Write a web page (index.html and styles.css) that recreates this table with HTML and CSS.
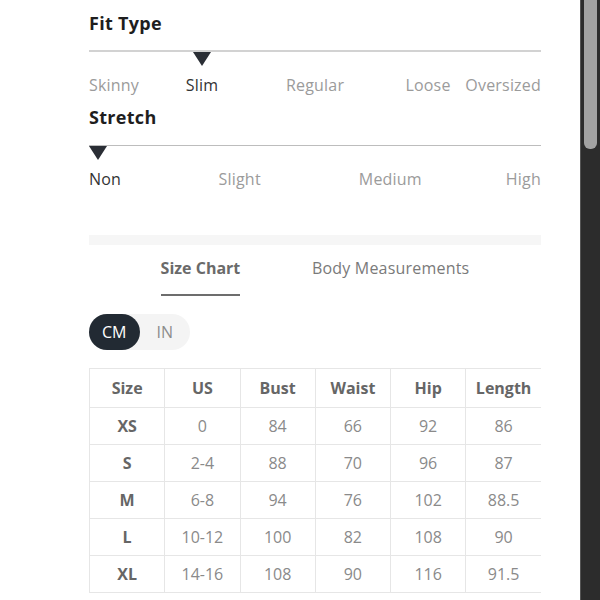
FILE: index.html
```html
<html>
  <head>
    <title>Size Guide</title>
    <link rel="stylesheet" href="styles.css">
  </head>
  <body>
    <div class="page">
      <div class="content">
        <h3 class="attr-title">Fit Type</h3>
        <div class="scale">
          <div class="tick first"><span class="marker"></span><span class="tick-label">Skinny</span></div>
          <div class="tick active"><span class="marker"></span><span class="tick-label">Slim</span></div>
          <div class="tick"><span class="marker"></span><span class="tick-label">Regular</span></div>
          <div class="tick"><span class="marker"></span><span class="tick-label">Loose</span></div>
          <div class="tick last"><span class="marker"></span><span class="tick-label">Oversized</span></div>
        </div>

        <h3 class="attr-title second">Stretch</h3>
        <div class="scale thin">
          <div class="tick first active"><span class="marker"></span><span class="tick-label">Non</span></div>
          <div class="tick"><span class="marker"></span><span class="tick-label">Slight</span></div>
          <div class="tick"><span class="marker"></span><span class="tick-label">Medium</span></div>
          <div class="tick last"><span class="marker"></span><span class="tick-label">High</span></div>
        </div>

        <div class="band"></div>

        <div class="tabs">
          <div class="tab selected">Size Chart</div>
          <div class="tab">Body Measurements</div>
        </div>

        <div class="units">
          <span class="unit on">CM</span>
          <span class="unit">IN</span>
        </div>

        <table class="chart">
          <thead>
            <tr><th>Size</th><th>US</th><th>Bust</th><th>Waist</th><th>Hip</th><th>Length</th></tr>
          </thead>
          <tbody>
            <tr><th>XS</th><td>0</td><td>84</td><td>66</td><td>92</td><td>86</td></tr>
            <tr><th>S</th><td>2-4</td><td>88</td><td>70</td><td>96</td><td>87</td></tr>
            <tr><th>M</th><td>6-8</td><td>94</td><td>76</td><td>102</td><td>88.5</td></tr>
            <tr><th>L</th><td>10-12</td><td>100</td><td>82</td><td>108</td><td>90</td></tr>
            <tr><th>XL</th><td>14-16</td><td>108</td><td>90</td><td>116</td><td>91.5</td></tr>
          </tbody>
        </table>
      </div>
    </div>
    <div class="rail"><div class="thumb"></div></div>
  </body>
</html>
```

FILE: styles.css
```css
body {
  margin: 0;
  display: flex;
  height: 600px;
  overflow: hidden;
  background: #fff;
  font-family: "Open Sans", "Liberation Sans", sans-serif;
  color: #333;
}
.page {
  flex: 1;
  padding: 12px 0 0 89px;
}
.content {
  width: 452px;
}
.attr-title {
  margin: 0;
  font-size: 18px;
  line-height: 22px;
  font-weight: 700;
  letter-spacing: 0.3px;
  color: #1e1e1e;
}
.attr-title.second {
  margin-top: 11px;
}
.scale {
  display: flex;
  justify-content: space-between;
  margin-top: 16px;
  border-top: 2px solid #d2d2d2;
}
.scale.thin {
  margin-top: 17px;
  border-top: 1px solid #bdbdbd;
}
.tick {
  width: 0;
  display: flex;
  flex-direction: column;
  align-items: center;
}
.tick.first {
  align-items: flex-start;
}
.tick.last {
  align-items: flex-end;
}
.marker {
  width: 0;
  height: 0;
  border-left: 9.5px solid transparent;
  border-right: 9.5px solid transparent;
  border-top: 14px solid #2a2e35;
  visibility: hidden;
}
.tick.active .marker {
  visibility: visible;
}
.tick-label {
  margin-top: 9px;
  white-space: nowrap;
  font-size: 16px;
  line-height: 20px;
  letter-spacing: 0.2px;
  color: #9b9b9b;
}
.tick.active .tick-label {
  color: #333;
}
.band {
  height: 10px;
  margin-top: 46px;
  background: #f6f6f6;
}
.tabs {
  display: flex;
  justify-content: space-evenly;
  margin-top: 13px;
}
.tab {
  font-size: 16px;
  line-height: 20px;
  letter-spacing: 0.2px;
  color: #7a7a7a;
  padding-bottom: 16px;
  border-bottom: 2px solid transparent;
}
.tab.selected {
  font-weight: 700;
  letter-spacing: 0;
  color: #6a6a6a;
  border-bottom-color: #6d6d6d;
}
.units {
  display: flex;
  width: 101px;
  margin-top: 18px;
  border-radius: 18px;
  background: #f4f4f4;
}
.unit {
  flex: 1;
  height: 36px;
  line-height: 36px;
  text-align: center;
  font-size: 16px;
  color: #8c8c8c;
  border-radius: 18px;
}
.unit.on {
  background: #222a33;
  color: #fff;
}
.chart {
  width: 452px;
  margin-top: 18px;
  border-collapse: collapse;
  table-layout: fixed;
}
.chart th,
.chart td {
  border: 1px solid #e6e6e6;
  padding: 8px 0;
  font-size: 16px;
  line-height: 20px;
  text-align: center;
  color: #8a8a8a;
  font-weight: 400;
}
.chart th {
  font-weight: 700;
  color: #666;
}
.chart thead th {
  padding: 9px 0;
}
.chart th:last-child,
.chart td:last-child {
  border-right: none;
}
.rail {
  width: 19px;
  background: #2c2c2c;
  border-left: 1px solid #555;
}
.thumb {
  width: 13px;
  height: 149px;
  margin-left: 3px;
  background: #a2a2a2;
  border-radius: 0 0 6px 6px;
}
```
